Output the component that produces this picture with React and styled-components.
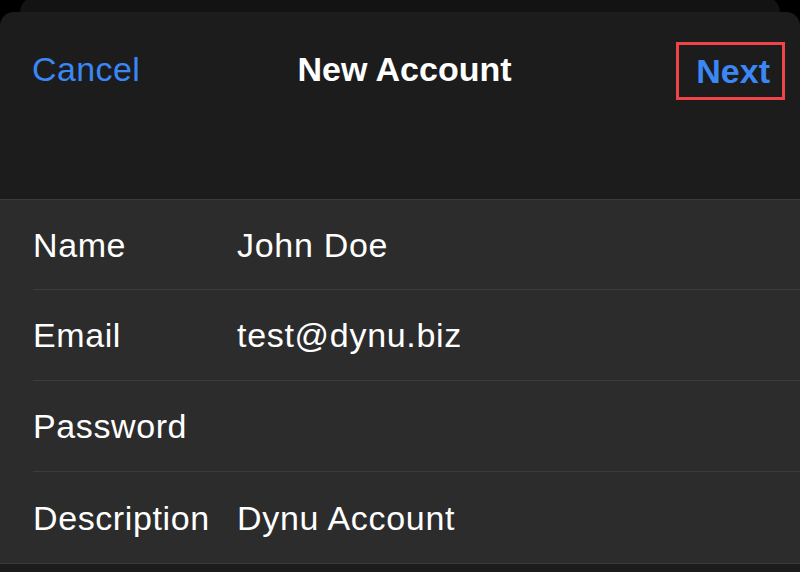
import React from "react";
import styled, { createGlobalStyle } from "styled-components";

const GlobalStyle = createGlobalStyle`
  html, body {
    margin: 0;
    padding: 0;
    background: #000;
    overflow: hidden;
  }
  body {
    font-family: "Liberation Sans", Arial, sans-serif;
    -webkit-font-smoothing: antialiased;
  }
`;

const Backdrop = styled.div`
  height: 15px;
  margin: -3px 20px 0;
  background: #131313;
  border-radius: 24px 24px 0 0;
`;

const Sheet = styled.div`
  background: #1c1c1c;
  border-radius: 14px 14px 0 0;
  min-height: 560px;
`;

const Header = styled.div`
  height: 187px;
  box-sizing: border-box;
  padding: 30px 15px 0 32px;
`;

const NavBar = styled.div`
  display: flex;
  align-items: center;
  justify-content: space-between;
  height: 58px;
  position: relative;
`;

const NavButton = styled.button`
  background: none;
  border: ${({ highlighted }) => (highlighted ? "3px solid #f0444a" : "none")};
  padding: ${({ highlighted }) => (highlighted ? "0 12px 2px 17px" : "0 0 4px 0")};
  height: ${({ highlighted }) => (highlighted ? "58px" : "auto")};
  box-sizing: border-box;
  font-family: inherit;
  font-size: 34px;
  line-height: 52px;
  font-weight: ${({ bold }) => (bold ? 700 : 400)};
  letter-spacing: ${({ bold }) => (bold ? "0" : "0.4px")};
  color: #3a87f5;
  cursor: pointer;
`;

const Title = styled.h1`
  position: absolute;
  left: 0;
  right: 0;
  margin: 0 auto;
  width: max-content;
  font-size: 34px;
  font-weight: 700;
  color: #fff;
  line-height: 52px;
  padding-bottom: 4px;
  pointer-events: none;
  transform: translateX(-4px);
`;

const List = styled.div`
  background: #2c2c2c;
  border-top: 1px solid #3a3a3a;
  border-bottom: 1px solid #3a3a3a;
`;

const Row = styled.div`
  display: grid;
  grid-template-columns: 204px 1fr;
  align-items: center;
  height: ${({ first }) => (first ? "90px" : "91px")};
  box-sizing: border-box;
  margin-left: 33px;
  border-bottom: ${({ last }) => (last ? "none" : "1px solid #3c3c3c")};
`;

const Label = styled.span`
  font-size: 34px;
  letter-spacing: 0.6px;
  color: #fff;
  padding-top: 1px;
`;

const Value = styled.span`
  font-size: 34px;
  letter-spacing: 0.7px;
  color: #fff;
  padding-top: 1px;
`;

const fields = [
  { label: "Name", value: "John Doe" },
  { label: "Email", value: "test@dynu.biz" },
  { label: "Password", value: "" },
  { label: "Description", value: "Dynu Account" },
];

const App = () => {
  return (
    <>
      <GlobalStyle />
      <Backdrop />
      <Sheet>
        <Header>
          <NavBar>
            <NavButton>Cancel</NavButton>
            <Title>New Account</Title>
            <NavButton bold highlighted>
              Next
            </NavButton>
          </NavBar>
        </Header>
        <List>
          {fields.map((f, i) => (
            <Row
              key={f.label}
              first={i === 0}
              last={i === fields.length - 1}
            >
              <Label>{f.label}</Label>
              <Value>{f.value}</Value>
            </Row>
          ))}
        </List>
      </Sheet>
    </>
  );
};

export default App;
